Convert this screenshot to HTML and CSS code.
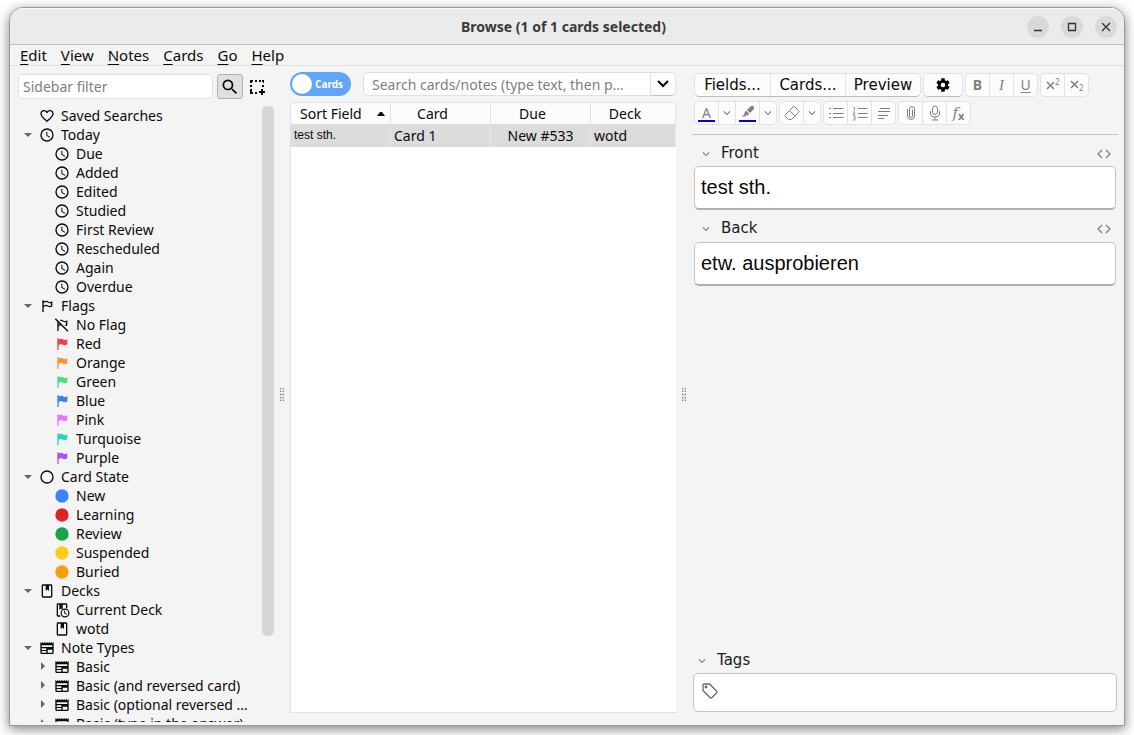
FILE: index.html
```html
<!DOCTYPE html>
<html lang="en">
<head>
<meta charset="utf-8">
<title>Browse (1 of 1 cards selected)</title>
<link rel="stylesheet" href="styles.css">
</head>
<body>
<svg class="defs" aria-hidden="true">
  <symbol id="heart" viewBox="0 0 24 24"><path d="M12.1,18.55L12,18.65L11.89,18.55C7.14,14.24 4,11.39 4,8.5C4,6.5 5.5,5 7.5,5C9.04,5 10.54,6 11.07,7.36H12.93C13.46,6 14.96,5 16.5,5C18.5,5 20,6.5 20,8.5C20,11.39 16.86,14.24 12.1,18.55M16.5,3C14.76,3 13.09,3.81 12,5.08C10.91,3.81 9.24,3 7.5,3C4.42,3 2,5.41 2,8.5C2,12.27 5.4,15.36 10.55,20.03L12,21.35L13.45,20.03C18.6,15.36 22,12.27 22,8.5C22,5.41 19.58,3 16.5,3Z"/></symbol>
  <symbol id="clock" viewBox="0 0 24 24"><path d="M12,20A8,8 0 0,0 20,12A8,8 0 0,0 12,4A8,8 0 0,0 4,12A8,8 0 0,0 12,20M12,2A10,10 0 0,1 22,12A10,10 0 0,1 12,22C6.47,22 2,17.5 2,12A10,10 0 0,1 12,2M12.5,7V12.25L17,14.92L16.25,16.15L11,13V7H12.5Z"/></symbol>
  <symbol id="flag-line" viewBox="0 0 24 24"><path d="M6 3A1 1 0 0 1 7 4V4.88C8.06 4.44 9.5 4 11 4C14 4 14 6 16 6C19 6 20 4 20 4V12C20 12 19 14 16 14C13 14 13 12 11 12C8 12 7 14 7 14V21H5V4A1 1 0 0 1 6 3M7 7.25V11.5C7 11.5 9 10 11 10C13 10 14 12 16 12C18 12 18 11 18 11V7.5C18 7.5 17 8 16 8C14 8 13 6 11 6C9 6 7 7.25 7 7.25Z"/></symbol>
  <symbol id="flag-off" viewBox="0 0 24 24"><path d="M5 5.5L7 7.5V11.5C8 10.7 9.3 10.2 10.3 10.1L12 12C9 12 7 14 7 14V21H5ZM8.5 4.4C9.3 4.1 10.200 4 11 4C14 4 14 6 16 6C19 6 20 4 20 4V12C20 12 19.400 13.200 17.800 13.700L16.100 12C18 12 18 11 18 11V7.500C18 7.500 17 8 16 8C14 8 13 6 11 6L10.100 6.100Z"/><path d="M2 2.500L21 21.500" fill="none" stroke="currentColor" stroke-width="2"/></symbol>
  <symbol id="flag" viewBox="0 0 24 24"><path d="M6,3A1,1 0 0,1 7,4V4.88C8.06,4.44 9.5,4 11,4C14,4 14,6 16,6C19,6 20,4 20,4V12C20,12 19,14 16,14C13,14 13,12 11,12C8,12 7,14 7,14V21H5V4A1,1 0 0,1 6,3Z"/></symbol>
  <symbol id="ring" viewBox="0 0 24 24"><circle cx="12" cy="12" r="9" fill="none" stroke="currentColor" stroke-width="2"/></symbol>
  <symbol id="disc" viewBox="0 0 24 24"><circle cx="12" cy="12" r="10"/></symbol>
  <symbol id="book" viewBox="0 0 24 24"><path fill-rule="evenodd" d="M6 2H18A2 2 0 0 1 20 4V20A2 2 0 0 1 18 22H6A2 2 0 0 1 4 20V4A2 2 0 0 1 6 2M6 4V20H18V4H15V12L12.500 9.750L10 12V4Z"/></symbol>
  <symbol id="book-clock" viewBox="0 0 24 24"><path d="M6 2H18A2 2 0 0 1 20 4V9.500H18V4H13V12L10.500 9.750L8 12V4H6V20H9.500V22H6A2 2 0 0 1 4 20V4A2 2 0 0 1 6 2Z"/><circle cx="16.500" cy="16.500" r="5.800" fill="none" stroke="currentColor" stroke-width="1.800"/><path d="M16 13V17L19 18.500" fill="none" stroke="currentColor" stroke-width="1.500"/></symbol>
  <symbol id="news" viewBox="0 0 24 24"><path fill-rule="evenodd" d="M2 3L3.700 4.700L5.300 3L7 4.700L8.700 3L10.300 4.700L12 3L13.700 4.700L15.300 3L17 4.700L18.700 3L20.300 4.700L22 3V19A2 2 0 0 1 20 21H4A2 2 0 0 1 2 19ZM4 8V10.500H20V8ZM4 12.500V15H11V12.500ZM4 16.500V19H11V16.500ZM13 14.500V19H20V14.500Z"/></symbol>
  <symbol id="down" viewBox="0 0 15 15"><path d="M3 6H11L7 10Z"/></symbol>
  <symbol id="right" viewBox="0 0 15 15"><path d="M5 3V11L9 7Z"/></symbol>
  <symbol id="chev" viewBox="0 0 24 24"><path d="M7.41,8.58L12,13.17L16.59,8.58L18,10L12,16L6,10L7.41,8.58Z"/></symbol>
  <symbol id="magnify" viewBox="0 0 24 24"><path d="M9.5,3A6.5,6.5 0 0,1 16,9.5C16,11.11 15.41,12.59 14.44,13.73L14.71,14H15.5L20.5,19L19,20.5L14,15.5V14.71L13.73,14.44C12.59,15.41 11.11,16 9.5,16A6.5,6.5 0 0,1 3,9.5A6.5,6.5 0 0,1 9.5,3M9.5,5C7,5 5,7 5,9.5C5,12 7,14 9.5,14C12,14 14,12 14,9.5C14,7 12,5 9.5,5Z"/></symbol>
  <symbol id="code" viewBox="0 0 16 16"><path d="M6 4L2 8L6 12M10 4L14 8L10 12" fill="none" stroke="currentColor" stroke-width="1.300"/></symbol>
  <symbol id="grip" viewBox="0 0 4 13"><path fill="#d8d8d8" d="M0 0H4V4H0ZM0 5H4V8H0ZM0 9H4V13H0Z"/><path fill="#777" d="M0 0H1V1H0ZM3 0H4V1H3ZM0 3H1V4H0ZM3 3H4V4H3ZM0 6H1V7H0ZM3 6H4V7H3ZM0 9H1V10H0ZM3 9H4V10H3ZM0 12H1V13H0ZM3 12H4V13H3Z"/></symbol>
</svg>

<div class="window">
  <header class="titlebar">
    <h1 class="title">Browse (1 of 1 cards selected)</h1>
    <div class="controls">
      <button class="control" aria-label="Minimize"><svg viewBox="0 0 22 22"><path d="M7 14.500H15"/></svg></button>
      <button class="control" aria-label="Maximize"><svg viewBox="0 0 22 22"><path d="M7.500 7.500H14.500V14.500H7.500Z"/></svg></button>
      <button class="control" aria-label="Close"><svg viewBox="0 0 22 22"><path d="M7 7L15 15M15 7L7 15"/></svg></button>
    </div>
  </header>
  <nav class="menubar">
    <button class="menu"><u>E</u>dit</button>
    <button class="menu"><u>V</u>iew</button>
    <button class="menu"><u>N</u>otes</button>
    <button class="menu"><u>C</u>ards</button>
    <button class="menu"><u>G</u>o</button>
    <button class="menu"><u>H</u>elp</button>
  </nav>

  <main class="panes">
    <aside class="sidebar">
      <div class="filter-row">
        <input class="filter" type="text" placeholder="Sidebar filter" aria-label="Sidebar filter">
        <button class="tool tool-on" aria-label="Search tool"><svg class="icon20"><use href="#magnify"/></svg></button>
        <button class="tool tool-select" aria-label="Select tool"><svg class="icon16" viewBox="0 0 16 16"><path d="M1 1H4V3H3V4H1ZM6 1H8V3H6ZM10 1H12V3H10ZM13 1H15V4H14V3H13ZM1 6H3V8H1ZM1 10H3V12H1ZM13 6H15V8H13ZM1 12H3V13H4V15H1ZM6 13H8V15H6ZM12 10H14V12H16V14H14V16H12V14H10V12H12Z"/></svg></button>
      </div>
      <div class="tree-wrap">
        <ul class="tree">
          <li class="node"><span class="arrow"></span><svg class="icon16"><use href="#heart"/></svg><span class="name">Saved Searches</span></li>
          <li class="node"><svg class="arrow"><use href="#down"/></svg><svg class="icon16"><use href="#clock"/></svg><span class="name">Today</span></li>
          <li class="node sub"><span class="arrow"></span><svg class="icon16"><use href="#clock"/></svg><span class="name">Due</span></li>
          <li class="node sub"><span class="arrow"></span><svg class="icon16"><use href="#clock"/></svg><span class="name">Added</span></li>
          <li class="node sub"><span class="arrow"></span><svg class="icon16"><use href="#clock"/></svg><span class="name">Edited</span></li>
          <li class="node sub"><span class="arrow"></span><svg class="icon16"><use href="#clock"/></svg><span class="name">Studied</span></li>
          <li class="node sub"><span class="arrow"></span><svg class="icon16"><use href="#clock"/></svg><span class="name">First Review</span></li>
          <li class="node sub"><span class="arrow"></span><svg class="icon16"><use href="#clock"/></svg><span class="name">Rescheduled</span></li>
          <li class="node sub"><span class="arrow"></span><svg class="icon16"><use href="#clock"/></svg><span class="name">Again</span></li>
          <li class="node sub"><span class="arrow"></span><svg class="icon16"><use href="#clock"/></svg><span class="name">Overdue</span></li>
          <li class="node"><svg class="arrow"><use href="#down"/></svg><svg class="icon16"><use href="#flag-line"/></svg><span class="name">Flags</span></li>
          <li class="node sub"><span class="arrow"></span><svg class="icon16"><use href="#flag-off"/></svg><span class="name">No Flag</span></li>
          <li class="node sub"><span class="arrow"></span><svg class="icon16 red"><use href="#flag"/></svg><span class="name">Red</span></li>
          <li class="node sub"><span class="arrow"></span><svg class="icon16 orange"><use href="#flag"/></svg><span class="name">Orange</span></li>
          <li class="node sub"><span class="arrow"></span><svg class="icon16 green"><use href="#flag"/></svg><span class="name">Green</span></li>
          <li class="node sub"><span class="arrow"></span><svg class="icon16 blue"><use href="#flag"/></svg><span class="name">Blue</span></li>
          <li class="node sub"><span class="arrow"></span><svg class="icon16 pink"><use href="#flag"/></svg><span class="name">Pink</span></li>
          <li class="node sub"><span class="arrow"></span><svg class="icon16 turquoise"><use href="#flag"/></svg><span class="name">Turquoise</span></li>
          <li class="node sub"><span class="arrow"></span><svg class="icon16 purple"><use href="#flag"/></svg><span class="name">Purple</span></li>
          <li class="node"><svg class="arrow"><use href="#down"/></svg><svg class="icon16"><use href="#ring"/></svg><span class="name">Card State</span></li>
          <li class="node sub"><span class="arrow"></span><svg class="icon16 blue"><use href="#disc"/></svg><span class="name">New</span></li>
          <li class="node sub"><span class="arrow"></span><svg class="icon16 learning"><use href="#disc"/></svg><span class="name">Learning</span></li>
          <li class="node sub"><span class="arrow"></span><svg class="icon16 review"><use href="#disc"/></svg><span class="name">Review</span></li>
          <li class="node sub"><span class="arrow"></span><svg class="icon16 suspended"><use href="#disc"/></svg><span class="name">Suspended</span></li>
          <li class="node sub"><span class="arrow"></span><svg class="icon16 buried"><use href="#disc"/></svg><span class="name">Buried</span></li>
          <li class="node"><svg class="arrow"><use href="#down"/></svg><svg class="icon16"><use href="#book"/></svg><span class="name">Decks</span></li>
          <li class="node sub"><span class="arrow"></span><svg class="icon16"><use href="#book-clock"/></svg><span class="name">Current Deck</span></li>
          <li class="node sub"><span class="arrow"></span><svg class="icon16"><use href="#book"/></svg><span class="name">wotd</span></li>
          <li class="node"><svg class="arrow"><use href="#down"/></svg><svg class="icon16"><use href="#news"/></svg><span class="name">Note Types</span></li>
          <li class="node sub"><svg class="arrow"><use href="#right"/></svg><svg class="icon16"><use href="#news"/></svg><span class="name">Basic</span></li>
          <li class="node sub"><svg class="arrow"><use href="#right"/></svg><svg class="icon16"><use href="#news"/></svg><span class="name">Basic (and reversed card)</span></li>
          <li class="node sub"><svg class="arrow"><use href="#right"/></svg><svg class="icon16"><use href="#news"/></svg><span class="name">Basic (optional reversed …</span></li>
          <li class="node sub"><svg class="arrow"><use href="#right"/></svg><svg class="icon16"><use href="#news"/></svg><span class="name">Basic (type in the answer)</span></li>
        </ul>
        <div class="scrollbar"><div class="thumb"></div></div>
      </div>
    </aside>

    <div class="splitter"><svg class="grip"><use href="#grip"/></svg></div>

    <section class="list">
      <div class="search-row">
        <label class="switch"><input class="knob" type="checkbox"><span>Cards</span></label>
        <div class="search">
          <input class="search-input" type="text" placeholder="Search cards/notes (type text, then p…" aria-label="Search cards/notes">
          <button class="search-drop" aria-label="Search history"><svg class="icon20" viewBox="0 0 20 20"><path d="M5 7L10 12L15 7" fill="none" stroke="currentColor" stroke-width="2"/></svg></button>
        </div>
      </div>
      <div class="table-box">
        <table class="cards">
          <colgroup><col class="col"><col class="col"><col class="col"><col></colgroup>
          <thead><tr><th><span class="sorted">Sort Field<svg class="sort" viewBox="0 0 8 5"><path d="M0 5H8L5 1H3Z"/></svg></span></th><th><span class="head">Card</span></th><th><span class="head">Due</span></th><th><span class="head">Deck</span></th></tr></thead>
          <tbody><tr><td class="sort-cell">test sth.</td><td>Card 1</td><td class="due">New #533</td><td>wotd</td></tr></tbody>
        </table>
      </div>
    </section>

    <div class="splitter"><svg class="grip"><use href="#grip"/></svg></div>

    <section class="editor">
      <div class="toolbar">
        <div class="bar">
          <div class="group strong"><button class="word">Fields...</button><button class="word">Cards...</button><button class="word">Preview</button></div>
          <div class="group strong"><button class="cog" aria-label="Settings"><svg class="icon16" viewBox="0 0 24 24"><path d="M12,15.5A3.5,3.5 0 0,1 8.5,12A3.5,3.5 0 0,1 12,8.5A3.5,3.5 0 0,1 15.5,12A3.5,3.5 0 0,1 12,15.5M19.43,12.97C19.47,12.65 19.5,12.33 19.5,12C19.5,11.67 19.47,11.34 19.43,11L21.54,9.37C21.73,9.22 21.78,8.95 21.66,8.73L19.66,5.27C19.54,5.05 19.27,4.96 19.05,5.05L16.56,6.05C16.04,5.66 15.5,5.32 14.87,5.07L14.5,2.42C14.46,2.18 14.25,2 14,2H10C9.75,2 9.54,2.18 9.5,2.42L9.13,5.07C8.5,5.32 7.96,5.66 7.44,6.05L4.95,5.05C4.73,4.96 4.46,5.05 4.34,5.27L2.34,8.73C2.21,8.95 2.27,9.22 2.46,9.37L4.57,11C4.53,11.34 4.5,11.67 4.5,12C4.5,12.33 4.53,12.65 4.57,12.97L2.46,14.63C2.27,14.78 2.21,15.05 2.34,15.27L4.34,18.73C4.46,18.95 4.73,19.03 4.95,18.95L7.44,17.94C7.96,18.34 8.5,18.68 9.13,18.93L9.5,21.58C9.54,21.82 9.75,22 10,22H14C14.25,22 14.46,21.82 14.5,21.58L14.87,18.93C15.5,18.67 16.04,18.34 16.56,17.94L19.05,18.95C19.27,19.03 19.54,18.95 19.66,18.73L21.66,15.27C21.78,15.05 21.73,14.78 21.54,14.63L19.43,12.97Z"/></svg></button></div>
          <div class="group"><button class="glyph bold">B</button><button class="glyph italic">I</button><button class="glyph under">U</button></div>
          <div class="group">
            <button class="glyph" aria-label="Superscript"><svg class="icon16" viewBox="0 0 16 16"><path class="script" d="M2 5L9 12M9 5L2 12"/><text x="10" y="8" class="tiny">2</text></svg></button>
            <button class="glyph" aria-label="Subscript"><svg class="icon16" viewBox="0 0 16 16"><path class="script" d="M2 4L9 11M9 4L2 11"/><text x="10" y="14" class="tiny">2</text></svg></button>
          </div>
        </div>
        <div class="bar">
          <div class="group">
            <button class="glyph swatch"><span class="letter">A</span></button>
            <button class="more" aria-label="Text colors"><svg class="icon14"><use href="#chev"/></svg></button>
            <button class="glyph swatch" aria-label="Highlight"><svg class="pen" viewBox="0 0 14 14"><path d="M6 5L9.500 1.500A2 2 0 0 1 12.500 4.500L9 8Z"/><path d="M5.200 5.800L8.200 8.800L6.500 10.500L5 10.200L4 11.500H1L3.500 9L3.500 7.500Z"/></svg></button>
            <button class="more" aria-label="Highlight colors"><svg class="icon14"><use href="#chev"/></svg></button>
          </div>
          <div class="group">
            <button class="glyph" aria-label="Remove formatting"><svg class="icon16" viewBox="0 0 16 16"><path class="line" d="M1.500 9.500L9 2Q10 1 11 2L14.500 5.500Q15.500 6.500 14.500 7.500L7.500 14.500H4.500L1.500 11.500Q.5 10.500 1.500 9.500M5.500 5.500L11 11"/></svg></button>
            <button class="more" aria-label="Formatting options"><svg class="icon14"><use href="#chev"/></svg></button>
          </div>
          <div class="group">
            <button class="glyph" aria-label="Bulleted list"><svg class="icon16" viewBox="0 0 16 16"><path class="line" d="M5 3.500H15.500M5 8.500H15.500M5 12.500H15.500M1 3.500H3M1 8.500H3M1 12.500H3"/></svg></button>
            <button class="glyph" aria-label="Numbered list"><svg class="icon16" viewBox="0 0 16 16"><path class="line" d="M6 3.500H15.500M6 8.500H15.500M6 12.500H15.500"/><path class="thin" d="M1 2.500H2.500V5.500M1 7H3L1 9.500H3M1 11H3V15H1M1.500 13H3"/></svg></button>
            <button class="glyph" aria-label="Alignment"><svg class="icon16" viewBox="0 0 16 16"><path class="line" d="M4 3.500H14M2 6.500H14M2 10.500H12M2 13.500H8"/></svg></button>
          </div>
          <div class="group">
            <button class="glyph" aria-label="Attach file"><svg class="icon16" viewBox="0 0 16 16"><path class="line" d="M4.500 4V11A3.500 3.500 0 0 0 11.500 11V4A2.500 2.500 0 0 0 6.500 4V11A1.500 1.500 0 0 0 9.500 11V4.500"/></svg></button>
            <button class="glyph" aria-label="Record audio"><svg class="icon16" viewBox="0 0 16 16"><path class="line" d="M8 1Q10.500 1 10.500 4V7Q10.500 9.500 8 9.500Q5.500 9.500 5.500 7V4Q5.500 1 8 1M3.500 6V8Q3.500 12 8 12Q12.500 12 12.500 8V6M8 12V15M5 15H11"/></svg></button>
            <button class="glyph fx" aria-label="Equations"><i>f</i><b>x</b></button>
          </div>
        </div>
      </div>
      <div class="fields">
        <div class="field">
          <div class="field-head"><svg class="icon14 fold"><use href="#chev"/></svg><label class="label" for="front">Front</label><button class="html" aria-label="Toggle HTML editor"><svg class="icon16"><use href="#code"/></svg></button></div>
          <input class="value" id="front" type="text" value="test sth.">
        </div>
        <div class="field">
          <div class="field-head"><svg class="icon14 fold"><use href="#chev"/></svg><label class="label" for="back">Back</label><button class="html" aria-label="Toggle HTML editor"><svg class="icon16"><use href="#code"/></svg></button></div>
          <input class="value" id="back" type="text" value="etw. ausprobieren">
        </div>
      </div>
      <div class="tags">
        <div class="tags-head"><svg class="icon14 fold"><use href="#chev"/></svg><label class="label" for="tags">Tags</label></div>
        <div class="tags-box"><svg class="tag" viewBox="0 0 18 18"><path d="M2 3Q2 2 3 2H8.500L15.500 9Q16.500 10 15.500 11L11 15.500Q10 16.500 9 15.500L2 8.500Z"/><circle cx="5" cy="5" r=".8"/></svg><input class="tags-input" id="tags" type="text"></div>
      </div>
    </section>
  </main>
</div>
</body>
</html>
```
FILE: styles.css
```css
* { box-sizing: border-box; }
body {
  margin: 0;
  height: 100vh;
  padding: 7px 9px 9px;
  background: #fff;
  color: #0a0a0a;
  font: 14px/19px "Noto Sans", sans-serif;
  overflow: hidden;
}
button, input { font: inherit; color: inherit; margin: 0; padding: 0; }
button { border: 0; background: none; }
input { min-width: 0; }
svg { fill: currentColor; flex: none; display: block; }
.defs { position: absolute; width: 0; height: 0; }
.icon14 { width: 14px; height: 14px; }
.icon16 { width: 16px; height: 16px; }
.icon20 { width: 20px; height: 20px; }

.window {
  height: 100%;
  display: flex;
  flex-direction: column;
  background: #f4f4f4;
  border: 1px solid #999;
  border-radius: 14px 14px 0 0;
  box-shadow: 0 3px 12px rgba(0, 0, 0, .5);
  overflow: hidden;
}
.titlebar {
  display: grid;
  grid-template-columns: 1fr auto 1fr;
  align-items: center;
  height: 37px;
  flex: none;
  padding-right: 7px;
  background: #ebebeb;
  border-top: 1px solid #fafafa;
  border-bottom: 1px solid #bdbdbd;
}
.title { grid-column: 2; margin: 0; font-size: 14px; font-weight: 700; color: #3a3a3a; }
.controls { display: flex; justify-content: flex-end; gap: 12px; }
.control { width: 22px; height: 22px; border-radius: 50%; background: #dadada; }
.control svg { fill: none; stroke: #333; stroke-width: 1.3; }

.menubar {
  display: flex;
  gap: 14px;
  flex: none;
  height: 21px;
  padding: 0 10px;
  border-bottom: 1px solid #e0e0e0;
  font-size: 15px;
}
.menu u { text-underline-offset: 3px; text-decoration-thickness: 1px; text-decoration-skip-ink: none; }

.panes {
  flex: 1;
  min-height: 0;
  display: grid;
  grid-template-columns: 256px 16px minmax(0, 386fr) 16px minmax(0, 426fr);
  padding: 6px 6px 3px 8px;
}
.sidebar { display: flex; flex-direction: column; min-height: 0; gap: 7px; padding-top: 2px; }
.filter-row { display: flex; gap: 4px; flex: none; }
.filter {
  flex: 1;
  height: 25px;
  padding: 0 4px;
  border: 1px solid #e0e0e0;
  border-radius: 5px;
  background: #fff;
}
.filter::placeholder, .search-input::placeholder { color: #808080; opacity: 1; }
.tool { width: 26px; height: 25px; display: grid; place-items: center; border-radius: 3px; }
.tool-select { width: 20px; margin-right: 7px; }
.tool-on { background: #e0e0e0; border: 1px solid #b0b0b0; }
.tree-wrap { flex: 1; min-height: 0; display: flex; }
.tree { flex: 1; min-width: 0; margin: 0; padding: 0 0 0 3px; list-style: none; overflow: hidden; }
.node { display: flex; align-items: center; height: 19px; }
.sub { padding-left: 15px; }
.arrow { width: 15px; height: 15px; margin-right: 3px; flex: none; color: #666; }
.name { margin-left: 6px; white-space: nowrap; }
.scrollbar { width: 12px; flex: none; }
.thumb { height: 532px; max-height: 86%; border-radius: 5px; background: #d6d6d6; }
.red { color: #ef4444; }
.orange { color: #fb923c; }
.green { color: #4ade80; }
.blue { color: #3b82f6; }
.pink { color: #e879f9; }
.turquoise { color: #2dd4bf; }
.purple { color: #a855f7; }
.learning { color: #dc2626; }
.review { color: #16a34a; }
.suspended { color: #facc15; }
.buried { color: #f59e0b; }

.splitter { display: grid; place-items: center; padding-bottom: 6px; }
.grip { width: 4px; height: 13px; }

.list { display: flex; flex-direction: column; gap: 6px; min-height: 0; padding-bottom: 9px; }
.search-row { display: flex; gap: 12px; flex: none; }
.switch {
  display: flex;
  align-items: center;
  gap: 3px;
  width: 61px;
  height: 24px;
  padding-left: 2px;
  border-radius: 12px;
  background: #60a5fa;
  color: #fff;
  font-size: 10px;
  font-weight: 700;
}
.knob { appearance: none; width: 20px; height: 20px; border-radius: 50%; background: #fff; }
.search { flex: 1; min-width: 0; display: flex; height: 24px; }
.search-input {
  flex: 1;
  padding: 0 8px;
  border: 1px solid #e0e0e0;
  border-radius: 5px 0 0 5px;
  background: #fff;
  text-overflow: ellipsis;
}
.search-drop {
  width: 25px;
  display: grid;
  place-items: center;
  border: 1px solid #e0e0e0;
  border-left: 0;
  border-bottom-color: #c0c0c0;
  border-radius: 0 5px 5px 0;
  background: #fcfcfc;
}
.table-box {
  flex: 1;
  border: 1px solid #e0e0e0;
  border-right: 0;
  border-radius: 5px 5px 0 0;
  background: #fff;
  overflow: hidden;
}
.cards { width: 100%; table-layout: fixed; border-collapse: separate; border-spacing: 0; }
.col { width: 100px; }
.cards th { height: 22px; padding: 0; font-weight: 400; background: #fcfcfc; border-right: 1px solid #e0e0e0; border-bottom: 1px solid #e0e0e0; }
.sorted { display: flex; align-items: center; justify-content: space-between; padding: 0 5px 0 9px; }
.sort { width: 8px; height: 5px; }
.head { padding-right: 16px; }
.cards td { height: 22px; padding: 0 3px 1px; background: #dcdcdc; border-right: 1px solid #e8e8e8; }
.cards .sort-cell { font: 12px/19px "Liberation Sans", sans-serif; }
.cards .due { text-align: center; }

.editor { display: flex; flex-direction: column; min-height: 0; font: 15px/20px "DejaVu Sans", sans-serif; }
.toolbar { display: flex; flex-direction: column; gap: 4px; padding: 1px 2px 9px; border-bottom: 1px solid #c4c4c4; }
.bar { display: flex; gap: 2px; height: 24px; }
.group {
  display: flex;
  border: 1px solid #e2e2e2;
  border-radius: 5px;
  background: #fcfcfc;
  overflow: hidden;
}
.group button { display: grid; place-items: center; }
.group button + button { border-left: 1px solid #e2e2e2; }
.strong { border-bottom-color: #bbb; }
.group .word { width: 75px; }
.cog { width: 38px; color: #000; }
.group .glyph { width: 24px; color: #808080; }
.group .glyph:first-child { width: 23px; }
.bold { font: 700 14px/20px "Noto Sans", sans-serif; }
.italic { font: italic 15px/20px "Liberation Serif", serif; }
.under { font: 14px/20px "Noto Sans", sans-serif; text-decoration: underline; text-underline-offset: 2px; }
.group .more { width: 17px; color: #808080; }
.group .swatch { align-content: space-between; padding: 3px 0 2px; }
.swatch::after { content: ""; width: 17px; height: 2px; background: #0000f0; }
.letter { font: 14px/15px "Noto Sans", sans-serif; }
.pen { width: 14px; height: 14px; }
.line, .thin, .script { fill: none; stroke: currentColor; stroke-width: 1; }
.thin { stroke-width: .8; }
.script { stroke-width: 1.5; }
.tiny { font: 8px "Noto Sans", sans-serif; }
.group .fx { display: flex; align-items: center; justify-content: center; font: 15px/20px "DejaVu Serif", serif; }
.fx b { font: 700 11px/11px "Noto Sans", sans-serif; padding-top: 5px; }

.fields { flex: 1; padding: 1px 2px 0; }
.field-head { display: flex; align-items: center; height: 30px; padding: 3px 4px 0 5px; color: #808080; }
.field + .field .field-head { height: 32px; }
.fold { margin-top: 2px; }
.label { margin-left: 8px; color: #1a1a1a; }
.html { margin-left: auto; padding-top: 3px; color: #808080; }
.value {
  display: block;
  width: 100%;
  height: 44px;
  padding: 0 6px;
  border: 1px solid #c4c4c4;
  border-bottom: 2px solid #b0b0b0;
  border-radius: 5px;
  background: #fff;
  font: 20px/24px "Liberation Sans", sans-serif;
}
.tags { flex: none; padding: 0 1px 10px; }
.tags-head { display: flex; align-items: center; height: 27px; padding-left: 2px; color: #808080; }
.tags-box {
  display: flex;
  height: 39px;
  padding: 8px 7px;
  border: 1px solid #c4c4c4;
  border-radius: 5px;
  background: #fff;
}
.tag { width: 18px; height: 18px; fill: none; stroke: #666; stroke-width: 1.3; }
.tags-input { flex: 1; border: 0; background: none; }
```
